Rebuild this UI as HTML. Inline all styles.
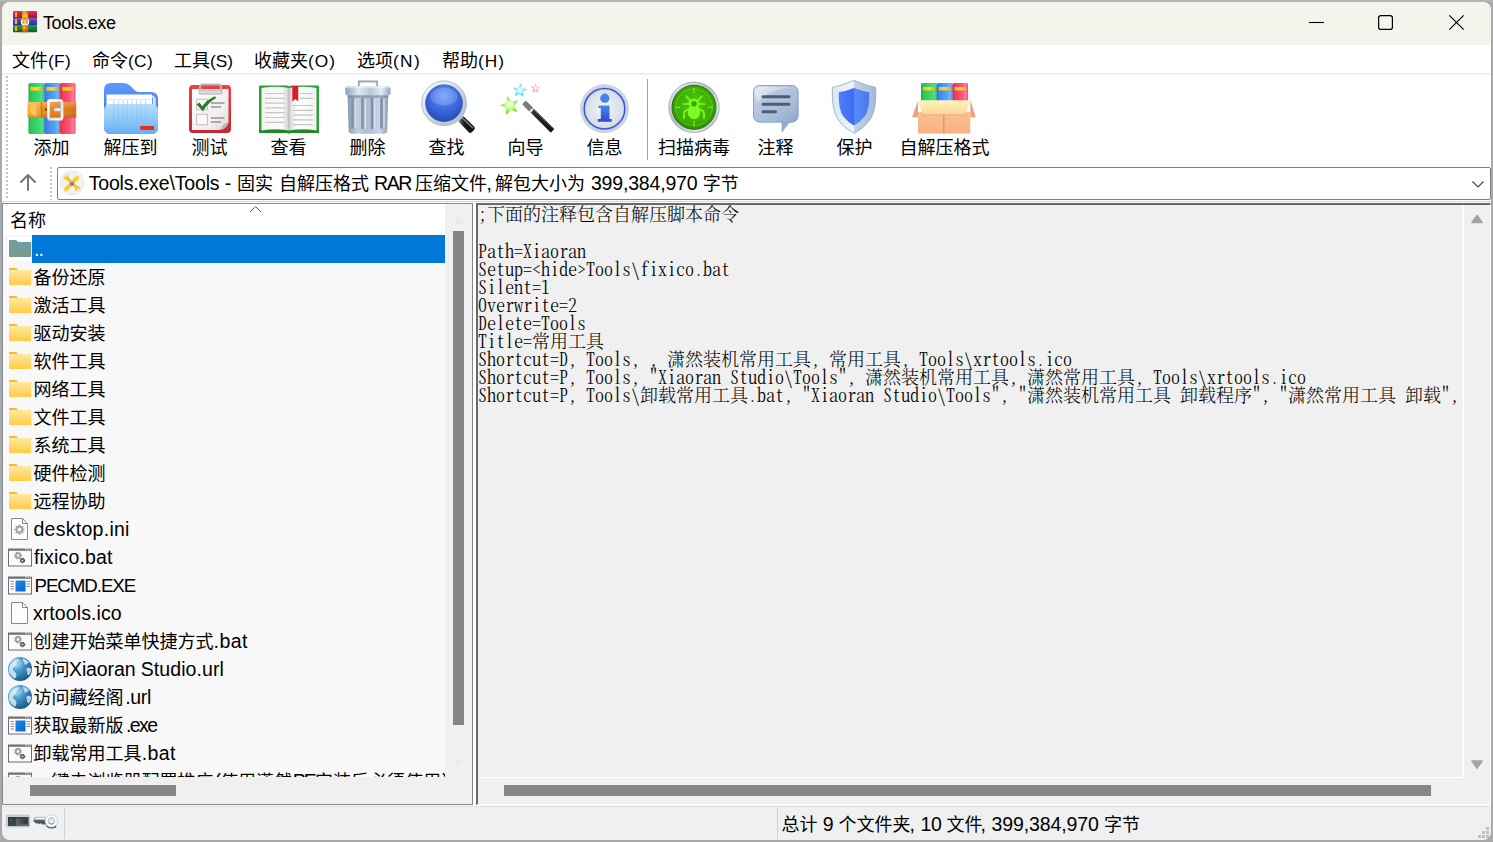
<!DOCTYPE html>
<html lang="zh-CN"><head><meta charset="utf-8"><title>Tools.exe - WinRAR</title>
<style>
html,body{margin:0;padding:0}
body{width:1493px;height:842px;overflow:hidden;position:relative;background:#a9a9a9;font-family:"Liberation Sans","Noto Sans CJK SC",sans-serif;font-size:18px;color:#000}
.abs{position:absolute}
#win{position:absolute;left:2px;top:2px;width:1489px;height:838px;background:#f0f0f0;border-radius:8px;overflow:hidden}
#win div{position:absolute;left:0;width:1489px}
.t{position:absolute;white-space:pre;font-size:18px}
.l{font-family:"Liberation Sans",sans-serif}
.c{font-family:"Liberation Sans","Noto Sans CJK SC",sans-serif}
.k{font-family:"Noto Sans CJK SC",sans-serif;font-size:18px}
svg{position:absolute;overflow:visible}
#list{position:absolute;left:3px;top:204px;width:442px;height:573px;overflow:hidden;background:#f8f8f8}
#list .hd{position:absolute;left:0;top:0;width:442px;height:31px;background:#fff}
#list .sel{position:absolute;left:29px;top:31px;width:413px;height:28px;background:#0078d7}
#list .selic{position:absolute;left:5px;top:33px;width:24px;height:24px;background:#fff}
#cmt{position:absolute;left:478px;top:205px;width:985px;height:572px;overflow:hidden;background:#f0f0f0}
.cm{font-variant-ligatures:none;font-weight:300;position:absolute;left:0;white-space:pre;font-family:"Noto Serif CJK SC","Liberation Serif",serif;font-feature-settings:"hwid";font-size:18px;line-height:18px;height:18px;color:#000}
.thumb{position:absolute;background:#868686}

</style></head>
<body>
<div class="abs" id="topstrip" style="left:0;top:0;width:1493px;height:2px;background:#b4b4b4"></div>
<div id="win"><div style="top:0;height:43px;background:#f3f4eb"></div><div style="top:43px;height:158px;background:#fff"></div><div style="top:71px;height:2px;background:#f0f0f0"></div></div>
<svg width="0" height="0" style="left:0;top:0"><defs>
<linearGradient id="gf" x1="0" y1="0" x2="0" y2="1"><stop offset="0" stop-color="#ffe9a3"/><stop offset="1" stop-color="#ffcb45"/></linearGradient>
<linearGradient id="gu" x1="0" y1="0" x2="0" y2="1"><stop offset="0" stop-color="#6f9ea8"/><stop offset="1" stop-color="#7a9a86"/></linearGradient>
<radialGradient id="gg" cx="0.32" cy="0.28" r="0.8"><stop offset="0" stop-color="#8fd0ee"/><stop offset="0.5" stop-color="#3a8fc4"/><stop offset="1" stop-color="#17507c"/></radialGradient>
<linearGradient id="gb" x1="0" y1="0" x2="1" y2="1"><stop offset="0" stop-color="#1e8be6"/><stop offset="1" stop-color="#0f62c4"/></linearGradient>
<g id="i-fold"><path d="M4 5.6Q4 5 4.8 5H10.5Q11.3 5 11.8 5.6L13.2 7.3H4Z" fill="#f7b928"/><rect x="4" y="7" width="22.3" height="15" rx="0.8" fill="url(#gf)"/></g>
<g id="i-up"><path d="M4 5.6Q4 5 4.8 5H10.5Q11.3 5 11.8 5.6L13.2 7.3H4Z" fill="#7f9a78"/><rect x="4" y="7" width="22.3" height="15" rx="0.8" fill="url(#gu)"/></g>
<g id="i-doc"><path d="M6.500 3.500H17.500L22.500 8.500V24.500H6.500Z" fill="#fdfdfd" stroke="#8a8a8a" stroke-width="1"/><path d="M17.500 3.500V8.500H22.500" fill="none" stroke="#8a8a8a" stroke-width="1"/></g>
<g id="i-ini"><use href="#i-doc"/><path d="M19.64 13.84L19.64 15.36L18.50 15.48L17.95 16.81L18.68 17.70L17.60 18.78L16.71 18.05L15.38 18.60L15.26 19.74L13.74 19.74L13.62 18.60L12.29 18.05L11.40 18.78L10.32 17.70L11.05 16.81L10.50 15.48L9.36 15.36L9.36 13.84L10.50 13.72L11.05 12.39L10.32 11.50L11.40 10.42L12.29 11.15L13.62 10.60L13.74 9.46L15.26 9.46L15.38 10.60L16.71 11.15L17.60 10.42L18.68 11.50L17.95 12.39L18.50 13.72ZM16.30 14.60A1.8 1.8 0 1 0 12.70 14.60A1.8 1.8 0 1 0 16.30 14.60Z" fill="#9fa7af" fill-rule="evenodd"/></g>
<g id="i-win"><rect x="3.5" y="7" width="23" height="16" fill="#fbfbfb" stroke="#6e6e6e" stroke-width="1"/><rect x="3" y="5.5" width="24" height="2" fill="#6e6e6e"/><path d="M20 6h1.5M22.5 6h1.5M25 6h1" stroke="#fff" stroke-width="1"/></g>
<g id="i-bat"><use href="#i-win"/><g transform="translate(13,12.5)"><circle r="2.7" fill="none" stroke="#9aa2aa" stroke-width="2.2" stroke-dasharray="1.5 0.62"/><circle r="2.2" fill="none" stroke="#9aa2aa" stroke-width="1.5"/></g><g transform="translate(17.5,17.5)"><circle r="1.9" fill="none" stroke="#4c535a" stroke-width="1.7" stroke-dasharray="1.2 0.79"/><circle r="1.6" fill="none" stroke="#4c535a" stroke-width="1.1"/></g></g>
<g id="i-exe"><use href="#i-win"/><rect x="10.5" y="9.5" width="10" height="11" fill="url(#gb)"/><path d="M5.5 10.5h3.5M5.5 13h3.5M5.5 15.5h3.5M5.5 18h3.5M21.5 10.5h3.5M21.5 13h3.5M21.5 15.5h3.5" stroke="#8d8d8d" stroke-width="1"/></g>
<g id="i-url"><circle cx="15" cy="14" r="12" fill="url(#gg)"/><path d="M8 6.5q3-2.6 6-2.2q-.5 2.300-2.500 3q.5 2.500-1.500 4q-2.500 1-2 4q2.500 1.500 3.500 4q0 3-1.500 4.500q-4-2-6-6.500q-1.500-6 4-10.800z" fill="#d8ecf2" opacity=".85"/><path d="M18 3.200q4 1 6.500 4.500q-2.500 0-3 2q-2.500.5-2.500-2.500q-1.500-1.500-1-4zM22 13q2.500-1 4.500 1q-.5 4-3 6.500q-2-1-1.500-4q-1.500-2 0-3.500z" fill="#d8ecf2" opacity=".8"/><ellipse cx="11" cy="8" rx="7" ry="4.500" fill="#fff" opacity=".18"/></g>
</defs></svg>
<svg style="left:0;top:0" width="1493" height="46" viewBox="0 0 1493 46">
 <g fill="none" stroke="#000" stroke-width="1.2">
  <path d="M1309 22.5H1324" stroke-width="1.1"/>
  <rect x="1378.6" y="15.6" width="13.8" height="13.8" rx="2.2"/>
  <path d="M1449.3 15.3L1463.7 29.7M1463.7 15.3L1449.3 29.7"/>
 </g>
</svg>
<svg style="left:13px;top:11px" width="24" height="22" viewBox="13 11 24 22">
<defs>
<linearGradient id="tR" x1="0" y1="0" x2="0" y2="1"><stop offset="0" stop-color="#d8385a"/><stop offset=".6" stop-color="#c01a3a"/><stop offset="1" stop-color="#9d1230"/></linearGradient>
<linearGradient id="tB" x1="0" y1="0" x2="0" y2="1"><stop offset="0" stop-color="#5a5ac8"/><stop offset=".6" stop-color="#3c3ca8"/><stop offset="1" stop-color="#2d2d8c"/></linearGradient>
<linearGradient id="tG" x1="0" y1="0" x2="0" y2="1"><stop offset="0" stop-color="#239a50"/><stop offset=".6" stop-color="#0f7a3a"/><stop offset="1" stop-color="#0a5c2a"/></linearGradient>
<linearGradient id="tBelt" x1="0" x2="1"><stop offset="0" stop-color="#c97a10"/><stop offset=".35" stop-color="#f2b030"/><stop offset="1" stop-color="#c86c0c"/></linearGradient>
</defs>
<rect x="13" y="11" width="24" height="7.400" rx=".8" fill="url(#tR)"/>
<rect x="13" y="18.200" width="24" height="7" fill="url(#tB)"/>
<rect x="13" y="25" width="24" height="7.200" rx=".8" fill="url(#tG)"/>
<path d="M16 12.300v4.700M16 19.300v4.700M16 26.300v4.700" stroke="#fbb31c" stroke-width="2"/>
<rect x="21.900" y="11" width="6.300" height="21.200" fill="url(#tBelt)"/>
<path d="M22.400 15q2.600-3.800 5.300 0v7h-5.300z" fill="#f5b530"/><path d="M23.800 18.300h2.400" stroke="#c2500c" stroke-width=".8"/>
<path d="M21.600 19.500v3q0 1.900 1.900 1.900h3.100q1.900 0 1.900-1.900v-3" fill="none" stroke="#fbfbfb" stroke-width="1.300"/>
<rect x="24.200" y="21" width="1.700" height="3.600" fill="#cfd6dc"/><rect x="21.900" y="29.500" width="6.300" height="2.700" fill="#c8430a" opacity=".7"/>
</svg>
<div class="t" style="left:43px;top:7px;line-height:28px;height:28px;"><span class="k"></span><span class="l" style="letter-spacing:-0.394px;">Tools.exe</span></div>
<div class="t" style="left:12px;top:45px;line-height:28px;height:28px;"><span class="k"></span><span class="c">文件</span><span class="l" style="font-size:17.3px;letter-spacing:0.307px;">(F)</span></div>
<div class="t" style="left:92px;top:45px;line-height:28px;height:28px;"><span class="k"></span><span class="c">命令</span><span class="l" style="font-size:17.3px;letter-spacing:0.333px;">(C)</span></div>
<div class="t" style="left:174px;top:45px;line-height:28px;height:28px;"><span class="k"></span><span class="c">工具</span><span class="l" style="font-size:17.3px;letter-spacing:-0.016px;">(S)</span></div>
<div class="t" style="left:254px;top:45px;line-height:28px;height:28px;"><span class="k"></span><span class="c">收藏夹</span><span class="l" style="font-size:17.3px;letter-spacing:1.016px;">(O)</span></div>
<div class="t" style="left:357px;top:45px;line-height:28px;height:28px;"><span class="k"></span><span class="c">选项</span><span class="l" style="font-size:17.3px;letter-spacing:1.333px;">(N)</span></div>
<div class="t" style="left:442px;top:45px;line-height:28px;height:28px;"><span class="k"></span><span class="c">帮助</span><span class="l" style="font-size:17.3px;letter-spacing:1.000px;">(H)</span></div>
<div class="abs" style="left:6px;top:76px;width:2px;height:124px;background:repeating-linear-gradient(to bottom,#c4c4c4 0 2px,transparent 2px 4px)"></div>
<div class="abs" style="left:50px;top:167px;width:2px;height:33px;background:repeating-linear-gradient(to bottom,#c4c4c4 0 2px,transparent 2px 4px)"></div>
<div class="abs" style="left:647px;top:79px;width:1px;height:81px;background:#a0a0a0"></div>
<div class="t" style="left:33.5px;top:134px;width:36px;line-height:28px;text-align:center">添加</div>
<div class="t" style="left:103.5px;top:134px;width:54px;line-height:28px;text-align:center">解压到</div>
<div class="t" style="left:191.5px;top:134px;width:36px;line-height:28px;text-align:center">测试</div>
<div class="t" style="left:270.5px;top:134px;width:36px;line-height:28px;text-align:center">查看</div>
<div class="t" style="left:349.5px;top:134px;width:36px;line-height:28px;text-align:center">删除</div>
<div class="t" style="left:428.5px;top:134px;width:36px;line-height:28px;text-align:center">查找</div>
<div class="t" style="left:507.5px;top:134px;width:36px;line-height:28px;text-align:center">向导</div>
<div class="t" style="left:586.5px;top:134px;width:36px;line-height:28px;text-align:center">信息</div>
<div class="t" style="left:658.0px;top:134px;width:72px;line-height:28px;text-align:center">扫描病毒</div>
<div class="t" style="left:757.5px;top:134px;width:36px;line-height:28px;text-align:center">注释</div>
<div class="t" style="left:836.5px;top:134px;width:36px;line-height:28px;text-align:center">保护</div>
<div class="t" style="left:899.5px;top:134px;width:90px;line-height:28px;text-align:center">自解压格式</div>
<svg style="left:0;top:75px" width="1000" height="65" viewBox="0 75 1000 65">
<defs>
<linearGradient id="bkG" x1="0" x2="1"><stop offset="0" stop-color="#1fa544"/><stop offset=".12" stop-color="#2ec457"/><stop offset=".65" stop-color="#3fd772"/><stop offset=".85" stop-color="#52e088"/><stop offset="1" stop-color="#2fbf5c"/></linearGradient>
<linearGradient id="bkB" x1="0" x2="1"><stop offset="0" stop-color="#2f6fe0"/><stop offset=".15" stop-color="#3f86f0"/><stop offset=".65" stop-color="#55a2f6"/><stop offset=".85" stop-color="#6db6fa"/><stop offset="1" stop-color="#3f86ee"/></linearGradient>
<linearGradient id="bkR" x1="0" x2="1"><stop offset="0" stop-color="#e02445"/><stop offset=".15" stop-color="#f23a55"/><stop offset=".6" stop-color="#f8557a"/><stop offset=".85" stop-color="#fd7aa0"/><stop offset="1" stop-color="#ee4a78"/></linearGradient>
<linearGradient id="bkY" x1="0" x2="1"><stop offset="0" stop-color="#f7b900"/><stop offset=".5" stop-color="#ffd92e"/><stop offset="1" stop-color="#f9a800"/></linearGradient>
<linearGradient id="belt" x1="0" x2="1"><stop offset="0" stop-color="#f4ae2c"/><stop offset=".28" stop-color="#f2a025"/><stop offset=".3" stop-color="#ea8a1e"/><stop offset=".7" stop-color="#e67c1c"/><stop offset="1" stop-color="#d96a14"/></linearGradient>
<linearGradient id="beltV" x1="0" y1="0" x2="0" y2="1"><stop offset="0" stop-color="#fff" stop-opacity=".28"/><stop offset=".5" stop-color="#fff" stop-opacity="0"/><stop offset="1" stop-color="#7a3000" stop-opacity=".25"/></linearGradient>
<linearGradient id="silv" x1="0" y1="0" x2="1" y2="1"><stop offset="0" stop-color="#fdfdfd"/><stop offset=".5" stop-color="#d4d4d4"/><stop offset="1" stop-color="#f2f2f2"/></linearGradient>
<linearGradient id="fdBack" x1="0" y1="0" x2="0" y2="1"><stop offset="0" stop-color="#5d9bf9"/><stop offset="1" stop-color="#3c63ee"/></linearGradient>
<linearGradient id="fdFront" x1="0" y1="0" x2="0" y2="1"><stop offset="0" stop-color="#b6dcfb"/><stop offset=".5" stop-color="#8fcaf9"/><stop offset="1" stop-color="#63aef4"/></linearGradient>
<linearGradient id="clipR" x1="0" y1="0" x2="0" y2="1"><stop offset="0" stop-color="#ee4046"/><stop offset="1" stop-color="#c6282e"/></linearGradient>
<linearGradient id="paper" x1="0" y1="0" x2="1" y2="1"><stop offset="0" stop-color="#ffffff"/><stop offset=".7" stop-color="#eeeeee"/><stop offset="1" stop-color="#d8d8d8"/></linearGradient>
<linearGradient id="pgL" x1="0" x2="1"><stop offset="0" stop-color="#f4f4f4"/><stop offset=".75" stop-color="#fbfbfb"/><stop offset=".93" stop-color="#dcdcdc"/><stop offset="1" stop-color="#b9b9b9"/></linearGradient>
<linearGradient id="pgR" x1="0" x2="1"><stop offset="0" stop-color="#c4c4c4"/><stop offset=".1" stop-color="#e6e6e6"/><stop offset=".3" stop-color="#ffffff"/><stop offset="1" stop-color="#f2f2f2"/></linearGradient>
</defs>
<!-- 1 add: books + belt -->
<g>
 <rect x="28.500" y="83" width="16" height="51" rx="1.500" fill="url(#bkG)"/>
 <rect x="44.300" y="83" width="16" height="51" rx="1.500" fill="url(#bkB)"/>
 <rect x="60.100" y="83" width="15.400" height="51" rx="1.500" fill="url(#bkR)"/>
 <rect x="30.300" y="87" width="12" height="3.600" fill="url(#bkY)"/><rect x="46.200" y="87" width="12" height="3.600" fill="url(#bkY)"/><rect x="62" y="87" width="12" height="3.600" fill="url(#bkY)"/>
 <rect x="27.500" y="102" width="48.700" height="15.500" fill="url(#belt)"/>
 <rect x="27.500" y="102" width="48.700" height="15.500" fill="url(#beltV)"/>
 <path d="M36.500 103.500a6.500 6.200 0 0 0 0 12.500z" fill="#f9c65a" opacity=".9"/>
 <path d="M41.300 102V117.500" stroke="#c76a12" stroke-width="1"/>
 <circle cx="46.200" cy="109.600" r="1.300" fill="#7a3d0a"/>
 <rect x="48.500" y="100.500" width="13.500" height="18.600" rx="2.200" fill="none" stroke="#9c9c9c" stroke-width="3.600" opacity=".55"/><rect x="48.500" y="100.500" width="13.500" height="18.600" rx="2.200" fill="none" stroke="url(#silv)" stroke-width="2.800"/><rect x="48.500" y="100.500" width="13.500" height="18.600" rx="2.200" fill="none" stroke="#fff" stroke-width=".8" opacity=".8"/>
 
 <rect x="53.800" y="108" width="8" height="3.200" rx="1.600" fill="#e9edf0" stroke="#a9a9a9" stroke-width=".4"/>
</g>
<!-- 2 extract: folder -->
<g>
 <path d="M104 90q0-7 7-7h13q3.500 0 6 2.600l4.500 4.600q1.800 1.800 4.500 1.800h12q7 0 7 7v28q0 7-7 7h-40q-7 0-7-7z" fill="url(#fdBack)"/>
 <rect x="106.500" y="94.500" width="45.500" height="20" fill="#fff"/><path d="M152 96.500h1.500v18M153.500 98.500h1.500v16" stroke="#e3ecf6" stroke-width="1.400" fill="none"/>
 <path d="M106.500 99.500h45.500" stroke="#e8e8e8" stroke-width="1"/>
 <path d="M114 100v6M118.500 100v6M123 100v6M127.500 100v6M132 100v6M136.500 100v6M141 100v6M145.500 100v6" stroke="#c9d3dc" stroke-width="1"/>
 <path d="M104 111q0-7 7-7h40q7 0 7 7v16q0 7-7 7h-40q-7 0-7-7z" fill="url(#fdFront)"/>
 <path d="M114 106v16M118.500 106v16M123 106v16M127.500 106v16M132 106v16M136.500 106v16M141 106v16M145.500 106v16" stroke="#7db7ec" stroke-width="1" opacity=".45"/>
 <rect x="140.300" y="126" width="13.700" height="4" fill="#e82f1a"/>
</g>
<!-- 3 test: clipboard -->
<g>
 <rect x="189" y="85" width="42" height="48" rx="4" fill="url(#clipR)"/>
 <path d="M192 89h36.500v33q-1.500 7-10 8h-26.500z" fill="url(#paper)"/>
 <path d="M228.500 122q-6 1-8 8q7-1.500 8-8z" fill="#b9b9b9"/>
 <path d="M200 94v-7q0-2.500 2.500-2.500h16q2.500 0 2.500 2.500v7" fill="none" stroke="#b7b7b7" stroke-width="2"/>
 <rect x="199" y="90" width="23" height="4.200" rx="1" fill="#d9d9d9" stroke="#9d9d9d" stroke-width=".6"/>
 <rect x="196.700" y="99.200" width="10.600" height="10.600" fill="#fafafa" stroke="#c9a9a9" stroke-width=".8"/>
 <rect x="196.700" y="114.200" width="10.600" height="10.600" fill="#fafafa" stroke="#c9a9a9" stroke-width=".8"/>
 <path d="M196.500 104.500l3-2l2.800 3.800q4.500-6.500 12.700-10l1.200 1.800q-8.500 5-13.300 13.200z" fill="#2a7a30"/>
 <path d="M211 103h13.500M211 107h10M211 118h13.500M211 122h10" stroke="#a58f8f" stroke-width="1.300"/>
</g>
<!-- 4 view: open book -->
<g>
 <path d="M259 86.500q0-1 1-1h26q2.500 0 3 1q.5-1 3-1h26q1 0 1 1v46.500h-60z" fill="#2aa232"/>
 <path d="M259 130h60v3h-27q-3 0-3 1q0-1-3-1h-27z" fill="#1d8a27"/>
 <path d="M261.500 88q14-2.500 27.500 0v42.500q-13.500-2.500-27.500 0z" fill="url(#pgL)"/>
 <path d="M289 88q13.500-2.500 27.500 0v42.500q-14-2.500-27.500 0z" fill="url(#pgR)"/>
 <path d="M265 93.500h20M265 98.300h20M265 103.100h20M265 107.900h20M265 112.700h20M265 117.500h20M265 122.300h20M293 105.500h20M293 110.300h20M293 115.100h20M293 119.900h20M293 124.700h20M300 93.500h13M300 98.300h13" stroke="#c6c6c6" stroke-width="1.200"/>
 <path d="M292.300 86h6v15.500l-3-2.600l-3 2.600z" fill="#d81f26"/>
</g>
<defs>
<linearGradient id="trLid" x1="0" x2="1"><stop offset="0" stop-color="#8fa2b8"/><stop offset=".3" stop-color="#dfe8f1"/><stop offset=".55" stop-color="#b8c7d8"/><stop offset=".8" stop-color="#e3ebf3"/><stop offset="1" stop-color="#93a5ba"/></linearGradient>
<linearGradient id="trBody" x1="0" x2="1"><stop offset="0" stop-color="#8698b0"/><stop offset=".25" stop-color="#c3d0de"/><stop offset=".5" stop-color="#aebdd0"/><stop offset=".8" stop-color="#c9d5e2"/><stop offset="1" stop-color="#8c9db3"/></linearGradient>
<radialGradient id="lens" cx=".5" cy=".3" r=".75"><stop offset="0" stop-color="#6f9cf6"/><stop offset=".45" stop-color="#3f6fe4"/><stop offset="1" stop-color="#2447b5"/></radialGradient>
<linearGradient id="ring" x1="0" y1="0" x2="1" y2="1"><stop offset="0" stop-color="#ffffff"/><stop offset=".5" stop-color="#cfd8e2"/><stop offset="1" stop-color="#a9b6c4"/></linearGradient>
<linearGradient id="hdl" x1="0" y1="0" x2="1" y2="0"><stop offset="0" stop-color="#6d7884"/><stop offset=".35" stop-color="#1d1f24"/><stop offset="1" stop-color="#0c0c0e"/></linearGradient>
<radialGradient id="stG" cx=".5" cy=".5" r=".5"><stop offset="0" stop-color="#ffffff"/><stop offset=".35" stop-color="#d9ffb5"/><stop offset="1" stop-color="#62e000"/></radialGradient>
<radialGradient id="stC" cx=".5" cy=".5" r=".5"><stop offset="0" stop-color="#ffffff"/><stop offset=".35" stop-color="#c9f6ff"/><stop offset="1" stop-color="#1fd2f5"/></radialGradient>
<radialGradient id="stP" cx=".5" cy=".5" r=".5"><stop offset="0" stop-color="#ffffff"/><stop offset=".4" stop-color="#ffd3d3"/><stop offset="1" stop-color="#f47d7d"/></radialGradient>
<linearGradient id="wand" x1="0" y1="0" x2="1" y2="0"><stop offset="0" stop-color="#8a8a8a"/><stop offset=".4" stop-color="#2a2a2a"/><stop offset="1" stop-color="#111"/></linearGradient>
<radialGradient id="infoBg" cx=".5" cy=".5" r=".5"><stop offset="0" stop-color="#f4f7fa"/><stop offset=".7" stop-color="#d9e0e8"/><stop offset=".9" stop-color="#c7d0da"/><stop offset="1" stop-color="#e9edf1"/></radialGradient>
<linearGradient id="infoI" x1="0" y1="0" x2="0" y2="1"><stop offset="0" stop-color="#4a86ea"/><stop offset="1" stop-color="#2c49d8"/></linearGradient>
</defs>
<!-- 5 delete: trash -->
<g>
 <path d="M359 87v-5.500h18v5.500" fill="none" stroke="#8da0b6" stroke-width="2"/>
 <path d="M359.800 87v-4.700h16.400v4.700" fill="none" stroke="#d5dee8" stroke-width=".7"/>
 <rect x="345.300" y="86.200" width="45.200" height="9" rx="2" fill="url(#trLid)"/>
 <rect x="345.300" y="86.200" width="45.200" height="2" rx="1" fill="#fff" opacity=".45"/>
 <path d="M347.600 95.200h40.600l-1 35q0 3.600-4 3.600h-30.600q-4 0-4-3.600z" fill="url(#trBody)"/>
 <path d="M347.600 95.200h40.600v2.500h-40.600z" fill="#6c7f98" opacity=".55"/>
 <path d="M352.500 99v28.500M362.500 99v29M372 99v29M381.500 99v28.500" stroke="#7f92ab" stroke-width="2.600" stroke-linecap="round"/>
 <path d="M355.200 99v28.500M365.200 99v29M374.700 99v29M384 99v28" stroke="#e6edf4" stroke-width="1.200" stroke-linecap="round" opacity=".8"/>
</g>
<!-- 6 find: magnifier -->
<g>
 <path d="M458.500 121.500l5-5.200l10.800 10.500q1.200 1.500-.3 3.200l-2.300 2.300q-1.600 1.300-3 0z" fill="url(#hdl)"/>
 <path d="M462.500 118l10.500 10.200" stroke="#9aa6b2" stroke-width="1.200" opacity=".8"/>
 <circle cx="444" cy="103.200" r="22.800" fill="url(#ring)"/>
 <circle cx="444" cy="103.200" r="22.300" fill="none" stroke="#aeb9c5" stroke-width=".8"/>
 <circle cx="444" cy="103.200" r="18.300" fill="url(#lens)" stroke="#2a4cb0" stroke-width=".8"/>
 <ellipse cx="444" cy="96.500" rx="13.500" ry="9" fill="#fff" opacity=".16"/>
</g>
<!-- 7 wizard -->
<g>
 <path d="M522.300 104.300l3.400-3.600l28.700 28.200l-3.600 3.800z" fill="url(#wand)"/>
 <path d="M522.300 104.300l3.400-3.600l7 6.900l-3.500 3.700z" fill="#7c7c7c"/><path d="M529.200 111.200l3.500-3.700l1.500 1.500l-3.500 3.700z" fill="#f1f1f1"/>
 <path d="M525.200 101.200l28.600 28" stroke="#7d7d7d" stroke-width=".8"/>
 <path d="M0-9.500L2.700-3.400L9.200-2.800L4.300 1.600L5.700 8L0 4.700L-5.700 8L-4.300 1.600L-9.200-2.800L-2.700-3.400Z" transform="translate(509.800,105.500) rotate(-14)" fill="url(#stG)"/>
 <path d="M0-9.500L2.700-3.400L9.200-2.800L4.300 1.600L5.700 8L0 4.700L-5.700 8L-4.300 1.600L-9.200-2.800L-2.700-3.400Z" transform="translate(519.800,90.500) rotate(6) scale(.74)" fill="url(#stC)"/>
 <path d="M0-9.500L2.700-3.400L9.200-2.800L4.300 1.600L5.700 8L0 4.700L-5.700 8L-4.300 1.600L-9.200-2.800L-2.700-3.400Z" transform="translate(535.500,88.500) rotate(4) scale(.5)" fill="url(#stP)"/>
</g>
<!-- 8 info -->
<g>
 <circle cx="604.500" cy="108.700" r="24.300" fill="url(#infoBg)"/>
 <circle cx="604.500" cy="108.700" r="23.800" fill="none" stroke="#c3ccd6" stroke-width="1"/>
 <circle cx="604.500" cy="108.700" r="20.300" fill="none" stroke="#3558df" stroke-width="1.500"/>
 <circle cx="604.800" cy="98.200" r="4.600" fill="#4682ea"/>
 <path d="M598.500 105.500h11v13.600h2.300v2.600h-14v-2.600h3v-11h-2.300z" fill="url(#infoI)"/>
</g>
<defs>
<linearGradient id="vRing" x1="0" y1="0" x2="1" y2="1"><stop offset="0" stop-color="#f4f6f7"/><stop offset=".45" stop-color="#b4bcc2"/><stop offset=".75" stop-color="#dfe4e7"/><stop offset="1" stop-color="#8f989f"/></linearGradient>
<radialGradient id="vG" cx=".5" cy=".45" r=".55"><stop offset="0" stop-color="#52c70a"/><stop offset=".7" stop-color="#3fae06"/><stop offset="1" stop-color="#2a8c03"/></radialGradient>
<linearGradient id="cmG" x1="0" y1="0" x2="1" y2="1"><stop offset="0" stop-color="#dfe8f5"/><stop offset=".3" stop-color="#b7c8e2"/><stop offset=".65" stop-color="#a9bddb"/><stop offset="1" stop-color="#8ea6cb"/></linearGradient>
<linearGradient id="shO" x1="0" x2="1"><stop offset="0" stop-color="#dbe6f3"/><stop offset=".5" stop-color="#f1f6fb"/><stop offset=".5" stop-color="#c4d3e6"/><stop offset="1" stop-color="#a3b8d4"/></linearGradient>
<linearGradient id="shI" x1="0" x2="1"><stop offset="0" stop-color="#4d7ff5"/><stop offset=".5" stop-color="#3f6cf2"/><stop offset=".5" stop-color="#5b8bf8"/><stop offset="1" stop-color="#4a78f2"/></linearGradient>
<linearGradient id="bxF" x1="0" y1="0" x2="0" y2="1"><stop offset="0" stop-color="#f9c08f"/><stop offset="1" stop-color="#fbb183"/></linearGradient>
<linearGradient id="bxT" x1="0" y1="0" x2="0" y2="1"><stop offset="0" stop-color="#fff3bd"/><stop offset="1" stop-color="#fcd597"/></linearGradient>
</defs>
<!-- 9 virus scan -->
<g>
 <circle cx="694" cy="107.300" r="25.600" fill="url(#vRing)"/>
 <circle cx="694" cy="107.300" r="25.200" fill="none" stroke="#9aa3aa" stroke-width=".7"/>
 <circle cx="694" cy="107.300" r="22" fill="url(#vG)" stroke="#23780a" stroke-width="1"/>
 <circle cx="694" cy="107.300" r="18.300" fill="none" stroke="#6fe01f" stroke-width=".8" opacity=".8"/>
 <path d="M694 88v5.500M694 121v5.500M675 107.300h5M708 107.300h5" stroke="#78ee1e" stroke-width="1.300"/>
 <g fill="none" stroke="#7dfa1f" stroke-width="1.700" stroke-linecap="round" stroke-linejoin="round">
  <path d="M689.500 100l-3.200-3.800M698.500 100l3.200-3.800M688 104h-4.800M700 104h4.800M688.300 109.500q-4 .8-4.300 4.500v4.500M699.700 109.500q4 .8 4.300 4.500v4.500"/>
 </g>
 <ellipse cx="694" cy="111.800" rx="6.300" ry="7.400" fill="#7dfa1f"/>
 <path d="M688.300 104.500q0-6 5.700-6q5.700 0 5.700 6q-1.500 2.500-5.700 2.500q-4.200 0-5.700-2.500z" fill="#7dfa1f"/>
 <circle cx="694" cy="103.800" r="2.700" fill="#37a306"/>
</g>
<!-- 10 comment -->
<g>
 <path d="M781.600 121h9l-9 12z" fill="#93abc9"/>
 <rect x="753" y="85" width="45.500" height="37.500" rx="6.500" fill="url(#cmG)"/>
 <rect x="753.500" y="85.500" width="44.500" height="36.500" rx="6" fill="none" stroke="#8da5c8" stroke-width="1"/>
 <path d="M755 92q0-5 6-5h30q-22 2-34 16z" fill="#fff" opacity=".35"/>
 <path d="M763 96.700h26M763 104.300h26M763 111.800h12.500" stroke="#3d4b63" stroke-width="3" stroke-linecap="round" opacity=".85"/>
</g>
<!-- 11 protect: shield -->
<g>
 <path d="M854 80q11.500 5 22 7.200q1.500 24-7 34.500q-6 7.500-15 12q-9-4.500-15-12q-8.500-10.500-7-34.500q10.500-2.200 22-7.200z" fill="url(#shO)"/>
 <path d="M854 80.500q11.500 5 21.500 7q1.500 23.500-7 34q-6 7.500-14.500 11.700q-8.500-4.200-14.500-11.700q-8.500-10.500-7-34q10-2 21.500-7z" fill="none" stroke="#9fb3ce" stroke-width=".9"/>
 <path d="M854 88q8.500 3.300 15.200 4.300q.8 17.500-4.800 24.500q-4.400 5.700-10.400 8.700q-6-3-10.400-8.700q-5.600-7-4.800-24.500q6.700-1 15.200-4.300z" fill="url(#shI)"/>
</g>
<!-- 12 sfx -->
<g>
 <rect x="921" y="83" width="16" height="20" rx="1.500" fill="url(#bkG)"/>
 <rect x="936.800" y="83" width="16" height="20" rx="1.500" fill="url(#bkB)"/>
 <rect x="952.600" y="83" width="15.400" height="20" rx="1.500" fill="url(#bkR)"/>
 <rect x="923" y="87" width="12" height="3.400" fill="url(#bkY)"/><rect x="938.800" y="87" width="12" height="3.400" fill="url(#bkY)"/><rect x="954.500" y="87" width="12" height="3.400" fill="url(#bkY)"/>
 <path d="M918 100.200l-6 17h6zM970.300 100.200l5.500 17h-5.500z" fill="#e8a57b"/>
 <rect x="918" y="112" width="52.300" height="21.500" fill="url(#bxF)"/>
 <path d="M943.800 114v19.500" stroke="#ea9a72" stroke-width="1.600"/>
 <path d="M918 100.200h52.300l-4.200 13q-.6 1.600-2.400 1.600h-39.400q-1.700 0-2.300-1.600z" fill="url(#bxT)"/>
 <path d="M922.200 114.800h43.600" stroke="#f0a878" stroke-width="1" opacity=".8"/>
</g>


</svg>

<svg style="left:0;top:160px" width="60" height="40" viewBox="0 160 60 40"><path d="M28 190V175M21 182L28 175L35 182" fill="none" stroke="#767676" stroke-width="2" stroke-linecap="round" stroke-linejoin="round"/></svg>
<div class="abs" style="left:57px;top:167px;width:1434px;height:33px;box-sizing:border-box;border:1px solid #7e7e7e;border-radius:2px;background:#fff"></div>
<svg style="left:1460px;top:170px" width="30" height="30" viewBox="1460 170 30 30"><path d="M1472.5 181.5L1478 187L1483.5 181.5" fill="none" stroke="#444" stroke-width="1.1"/></svg>
<div class="abs" style="left:2px;top:201px;width:1489px;height:1px;background:#d4d4d4"></div>
<svg style="left:59px;top:170px" width="26" height="26" viewBox="59 170 26 26">
<circle cx="72" cy="183" r="11.900" fill="#f1f1f1" stroke="#dedede" stroke-width=".8" stroke-dasharray="2.200 1.400"/>
<g stroke-linecap="round" fill="none">
<path d="M66.300 177.300L77.200 188.200" stroke="#f8c52c" stroke-width="3.200"/>
<path d="M66 189.200L77.300 177.600" stroke="#f9c93a" stroke-width="4"/>
<path d="M76 176.800l2.200 2.200" stroke="#fbe08a" stroke-width="1"/>
</g>
<circle cx="66.200" cy="177" r="2.600" fill="#f8c52c"/><circle cx="65.600" cy="175.700" r="1.300" fill="#f1f1f1"/>
<circle cx="77.700" cy="188.600" r="2.600" fill="#f8c52c"/><circle cx="78.400" cy="189.900" r="1.300" fill="#f1f1f1"/>
<path d="M70.300 180.500l.7 1.200h1.800l.8-1.200l.5 2v3.300h-4.300v-3.300z" fill="#a9a9ab"/>
<path d="M70.300 183.200h3.400M70.300 184.800h3.400" stroke="#6a5a50" stroke-width=".7"/>
</svg>
<div class="t" style="left:88.7px;top:168px;line-height:28px;height:28px;"><span class="k"></span><span class="l" style="font-size:19.5px;letter-spacing:-0.172px;">Tools.exe\Tools </span><span class="l" style="font-size:19.5px;letter-spacing:0.189px;">- </span><span class="c">固实 </span><span class="c" style="margin-left:0.98px;">自解压格式 </span><span class="l" style="font-size:19.5px;margin-left:-0.02px;letter-spacing:-1.398px;">RAR </span><span class="c">压缩文件</span><span class="l" style="font-size:19.5px;margin-left:-0.50px;letter-spacing:-1.172px;">, </span><span class="c">解包大小为 </span><span class="l" style="font-size:19.5px;margin-left:0.98px;letter-spacing:-0.180px;">399,384,970 </span><span class="c">字节</span></div>
<div class="abs" style="left:2px;top:203px;width:471px;height:602px;box-sizing:border-box;border:1px solid #828790;background:#f0f0f0"></div>
<div id="list"><div class="hd"></div><div class="sel"></div><div class="selic"></div>
<div class="t" style="left:7px;top:3px;line-height:28px">名称</div>
<svg style="left:240px;top:0" width="30" height="12" viewBox="243 204 30 12"><path d="M250 212L255.5 206.5L261 212" fill="none" stroke="#555" stroke-width="1"/></svg>
<svg class="ic" style="left:2px;top:31px" width="30" height="28"><use href="#i-up"/></svg><div class="t" style="left:31px;top:30px;line-height:28px;height:28px;color:#fff;"><span class="k"></span><span class="l" style="font-size:19.5px;letter-spacing:-0.922px;">..</span></div>
<svg class="ic" style="left:2px;top:59px" width="30" height="28"><use href="#i-fold"/></svg><div class="t" style="left:30.5px;top:58px;line-height:28px;height:28px;"><span class="k"></span><span class="c">备份还原</span></div>
<svg class="ic" style="left:2px;top:87px" width="30" height="28"><use href="#i-fold"/></svg><div class="t" style="left:30.5px;top:86px;line-height:28px;height:28px;"><span class="k"></span><span class="c">激活工具</span></div>
<svg class="ic" style="left:2px;top:115px" width="30" height="28"><use href="#i-fold"/></svg><div class="t" style="left:30.5px;top:114px;line-height:28px;height:28px;"><span class="k"></span><span class="c">驱动安装</span></div>
<svg class="ic" style="left:2px;top:143px" width="30" height="28"><use href="#i-fold"/></svg><div class="t" style="left:30.5px;top:142px;line-height:28px;height:28px;"><span class="k"></span><span class="c">软件工具</span></div>
<svg class="ic" style="left:2px;top:171px" width="30" height="28"><use href="#i-fold"/></svg><div class="t" style="left:30.5px;top:170px;line-height:28px;height:28px;"><span class="k"></span><span class="c">网络工具</span></div>
<svg class="ic" style="left:2px;top:199px" width="30" height="28"><use href="#i-fold"/></svg><div class="t" style="left:30.5px;top:198px;line-height:28px;height:28px;"><span class="k"></span><span class="c">文件工具</span></div>
<svg class="ic" style="left:2px;top:227px" width="30" height="28"><use href="#i-fold"/></svg><div class="t" style="left:30.5px;top:226px;line-height:28px;height:28px;"><span class="k"></span><span class="c">系统工具</span></div>
<svg class="ic" style="left:2px;top:255px" width="30" height="28"><use href="#i-fold"/></svg><div class="t" style="left:30.5px;top:254px;line-height:28px;height:28px;"><span class="k"></span><span class="c">硬件检测</span></div>
<svg class="ic" style="left:2px;top:283px" width="30" height="28"><use href="#i-fold"/></svg><div class="t" style="left:30.5px;top:282px;line-height:28px;height:28px;"><span class="k"></span><span class="c">远程协助</span></div>
<svg class="ic" style="left:2px;top:311px" width="30" height="28"><use href="#i-ini"/></svg><div class="t" style="left:30.5px;top:310px;line-height:28px;height:28px;"><span class="k"></span><span class="l" style="font-size:19.5px;letter-spacing:0.270px;">desktop.ini</span></div>
<svg class="ic" style="left:2px;top:339px" width="30" height="28"><use href="#i-bat"/></svg><div class="t" style="left:31px;top:338px;line-height:28px;height:28px;"><span class="k"></span><span class="l" style="font-size:19.5px;letter-spacing:0.175px;">fixico.bat</span></div>
<svg class="ic" style="left:2px;top:367px" width="30" height="28"><use href="#i-exe"/></svg><div class="t" style="left:31.5px;top:366px;line-height:28px;height:28px;"><span class="k"></span><span class="l" style="font-size:18.7px;letter-spacing:-1.042px;">PECMD.EXE</span></div>
<svg class="ic" style="left:2px;top:395px" width="30" height="28"><use href="#i-doc"/></svg><div class="t" style="left:29.9px;top:394px;line-height:28px;height:28px;"><span class="k"></span><span class="l" style="font-size:19.5px;letter-spacing:0.093px;">xrtools.ico</span></div>
<svg class="ic" style="left:2px;top:423px" width="30" height="28"><use href="#i-bat"/></svg><div class="t" style="left:30.5px;top:422px;line-height:28px;height:28px;"><span class="k"></span><span class="c">创建开始菜单快捷方式</span><span class="l" style="font-size:19.5px;letter-spacing:0.467px;">.bat</span></div>
<svg class="ic" style="left:2px;top:451px" width="30" height="28"><use href="#i-url"/></svg><div class="t" style="left:30.5px;top:450px;line-height:28px;height:28px;"><span class="k"></span><span class="c">访问</span><span class="l" style="font-size:19.5px;margin-left:-0.50px;letter-spacing:-0.118px;">Xiaoran </span><span class="l" style="font-size:19.5px;letter-spacing:0.091px;">Studio.url</span></div>
<svg class="ic" style="left:2px;top:479px" width="30" height="28"><use href="#i-url"/></svg><div class="t" style="left:30.5px;top:478px;line-height:28px;height:28px;"><span class="k"></span><span class="c">访问藏经阁</span><span class="l" style="font-size:19.5px;margin-left:1.80px;letter-spacing:-0.348px;">.url</span></div>
<svg class="ic" style="left:2px;top:507px" width="30" height="28"><use href="#i-exe"/></svg><div class="t" style="left:30.5px;top:506px;line-height:28px;height:28px;"><span class="k"></span><span class="c">获取最新版</span><span class="l" style="font-size:19.5px;margin-left:2.50px;letter-spacing:-1.590px;">.exe</span></div>
<svg class="ic" style="left:2px;top:535px" width="30" height="28"><use href="#i-bat"/></svg><div class="t" style="left:30.5px;top:534px;line-height:28px;height:28px;"><span class="k"></span><span class="c">卸载常用工具</span><span class="l" style="font-size:19.5px;margin-left:0.20px;letter-spacing:0.442px;">.bat</span></div>
<svg class="ic" style="left:2px;top:563px" width="30" height="28"><use href="#i-bat"/></svg><div class="t" style="left:30.5px;top:562px;line-height:28px;height:28px;"><span class="k"></span><span class="c">一键去浏览器配置推广</span><span class="l" style="font-size:19.5px;margin-left:1.00px;letter-spacing:-1.000px;">(</span><span class="c">使用潇然</span><span class="l" style="font-size:19.5px;margin-left:0.70px;letter-spacing:-1.858px;">PE</span><span class="c">安装后必须使用</span><span class="l" style="font-size:19.5px;margin-left:1.00px;letter-spacing:0.794px;">).bat</span></div></div>
<div class="thumb" style="left:453px;top:231px;width:11px;height:494px"></div>
<div class="thumb" style="left:30px;top:785px;width:146px;height:11px"></div>
<svg style="left:446px;top:204px" width="26" height="574" viewBox="446 204 26 574"><path d="M453.5 223.5L458.5 215.5L463.5 223.5Z" fill="#ebebeb" stroke="#ebebeb" stroke-linejoin="round"/><path d="M453.5 759.5L458.5 767.5L463.5 759.5Z" fill="#ebebeb" stroke="#ebebeb" stroke-linejoin="round"/></svg>
<div class="abs" style="left:473px;top:203px;width:3px;height:602px;background:#fff"></div>
<div class="abs" style="left:476px;top:203px;width:1015px;height:602px;box-sizing:border-box;border-left:2px solid #696969;border-top:2px solid #696969;border-right:1px solid #fff;border-bottom:1px solid #fff;background:#f0f0f0"></div>
<div class="abs" style="left:478px;top:777px;width:986px;height:1px;background:#fff"></div>
<div class="abs" style="left:1463px;top:205px;width:1px;height:573px;background:#fff"></div>
<div id="cmt">
<div class="cm" style="top:-1px">;下面的注释包含自解压脚本命令</div>
<div class="cm" style="top:36px">Path=Xiaoran</div>
<div class="cm" style="top:54px">Setup=&lt;hide&gt;Tools\fixico.bat</div>
<div class="cm" style="top:72px">Silent=1</div>
<div class="cm" style="top:90px">Overwrite=2</div>
<div class="cm" style="top:108px">Delete=Tools</div>
<div class="cm" style="top:126px">Title=常用工具</div>
<div class="cm" style="top:144px">Shortcut=D, Tools, , 潇然装机常用工具, 常用工具, Tools\xrtools.ico</div>
<div class="cm" style="top:162px">Shortcut=P, Tools, &quot;Xiaoran Studio\Tools&quot;, 潇然装机常用工具, 潇然常用工具, Tools\xrtools.ico</div>
<div class="cm" style="top:180px">Shortcut=P, Tools\卸载常用工具.bat, &quot;Xiaoran Studio\Tools&quot;, &quot;潇然装机常用工具 卸载程序&quot;, &quot;潇然常用工具 卸载&quot;, &quot;%SystemRoot%\system32\cmd.exe&quot;</div></div>
<div class="thumb" style="left:504px;top:785px;width:927px;height:11px"></div>
<svg style="left:1464px;top:205px" width="26" height="573" viewBox="1464 205 26 573"><path d="M1472 222.5L1477 215.5L1482 222.5Z" fill="#a3a3a3" stroke="#a3a3a3" stroke-width="1.6" stroke-linejoin="round"/><path d="M1472 761L1477 768L1482 761Z" fill="#a3a3a3" stroke="#a3a3a3" stroke-width="1.6" stroke-linejoin="round"/></svg>
<div class="abs" style="left:2px;top:805px;width:1489px;height:1px;background:#fafafa"></div><div class="abs" style="left:2px;top:806px;width:1489px;height:1px;background:#dfdfdf"></div>
<div class="abs" style="left:64px;top:808px;width:1px;height:31px;background:#d2d2d2"></div>
<div class="abs" style="left:777px;top:808px;width:1px;height:31px;background:#d2d2d2"></div>
<div class="t" style="left:781.5px;top:809px;line-height:28px;height:28px;"><span class="k"></span><span class="c">总计 </span><span class="l" style="font-size:19.5px;margin-left:0.18px;letter-spacing:-0.233px;">9 </span><span class="c">个文件夹</span><span class="l" style="font-size:19.5px;margin-left:-1.00px;letter-spacing:0.078px;">, </span><span class="l" style="font-size:19.5px;letter-spacing:-0.370px;">10 </span><span class="c">文件</span><span class="l" style="font-size:19.5px;margin-left:-2.00px;letter-spacing:0.078px;">, </span><span class="l" style="font-size:19.5px;letter-spacing:-0.113px;">399,384,970 </span><span class="c">字节</span></div>
<svg style="left:4px;top:812px" width="58" height="18" viewBox="4 812 58 18">
<defs><linearGradient id="drv" x1="0" y1="0" x2="1" y2="1"><stop offset="0" stop-color="#2f363b"/><stop offset="1" stop-color="#4d565c"/></linearGradient>
<linearGradient id="drv2" x1="0" x2="1"><stop offset="0" stop-color="#5d676d"/><stop offset="1" stop-color="#2e3539"/></linearGradient>
<radialGradient id="kr" cx=".5" cy=".45" r=".5"><stop offset="0" stop-color="#ffffff"/><stop offset=".45" stop-color="#cfe0ea"/><stop offset=".55" stop-color="#ffffff"/><stop offset="1" stop-color="#f4f7f9"/></radialGradient></defs>
<rect x="6.300" y="815.200" width="23.400" height="11.600" rx="1.500" fill="#c4d3dc" stroke="#9fb2bf" stroke-width=".6"/>
<rect x="8" y="817" width="20.700" height="9" fill="url(#drv)"/>
<rect x="16" y="818.600" width="11" height="5.600" fill="url(#drv2)"/>
<path d="M16 825h11" stroke="#8e999f" stroke-width=".6"/>
<circle cx="11.700" cy="820.800" r="1.700" fill="#1d5c05"/><circle cx="11.300" cy="820.300" r=".55" fill="#cfe6c0"/>
<path d="M34.800 817.200h10.500v5l2 2.300h-5.300l-1.200-1.400l-1.300 1.400l-1.500-1.600l-1.500.8l-1.700-1.500l-1.500-1.300z" fill="#4c5660"/>
<path d="M35.500 817.200h10v2.600h-11.500z" fill="#fdfdfd" stroke="#8f9498" stroke-width=".5"/>
<path d="M46.500 825.300q4 4 9.500 .8" fill="none" stroke="#2e3a44" stroke-width="2"/>
<circle cx="51.400" cy="821" r="6.300" fill="url(#kr)" stroke="#b7bcc0" stroke-width=".6"/>
<circle cx="51.400" cy="821" r="3.300" fill="#dfeaf0" stroke="#9aa4ab" stroke-width=".7"/>
<path d="M49.500 823.300q2 1.400 4 0" stroke="#6fa2c4" stroke-width="1" fill="none"/>
</svg>
<svg style="left:1470px;top:825px" width="20" height="15" viewBox="1470 825 20 15"><g fill="#bfbfbf"><rect x="1486" y="827" width="3" height="3"/><rect x="1482" y="831" width="3" height="3"/><rect x="1486" y="831" width="3" height="3"/><rect x="1478" y="835" width="3" height="3"/><rect x="1482" y="835" width="3" height="3"/><rect x="1486" y="835" width="3" height="3"/></g></svg>

</body></html>
